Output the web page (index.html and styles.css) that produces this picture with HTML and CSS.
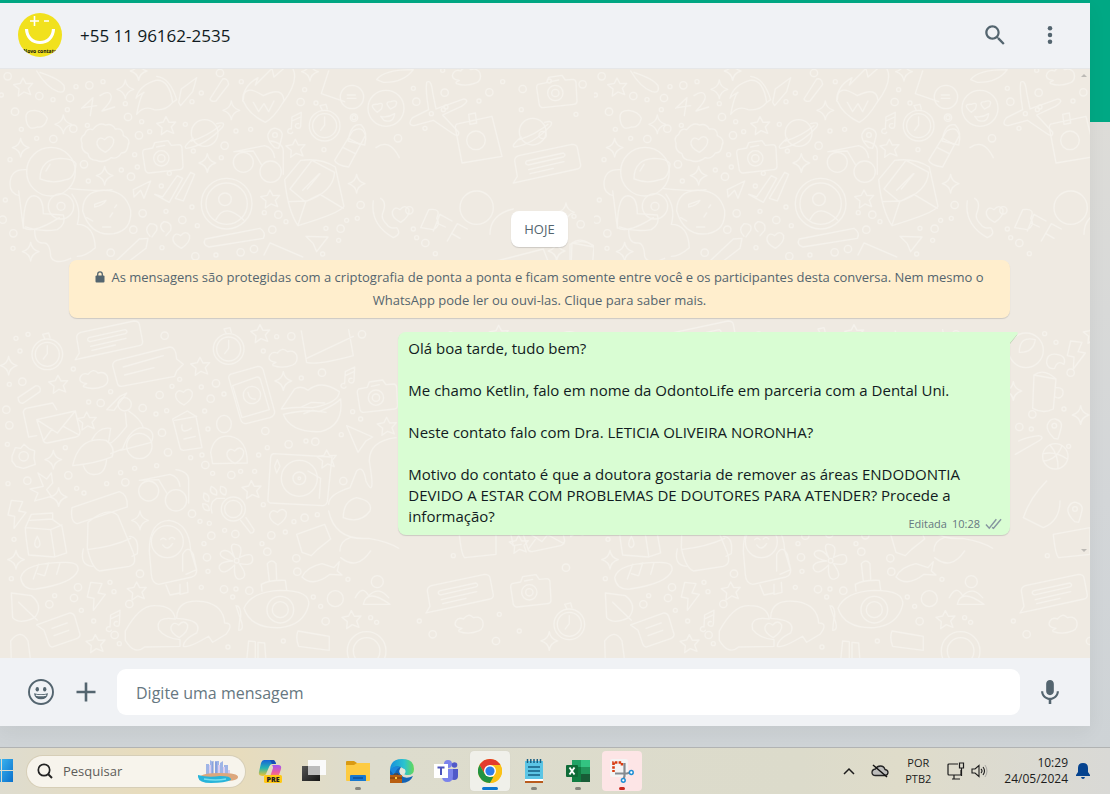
FILE: index.html
```html
<!DOCTYPE html>
<html lang="pt-BR">
<head>
<meta charset="utf-8">
<title>WhatsApp</title>
<link rel="stylesheet" href="styles.css">
</head>
<body>
<div class="desktop">
  <main class="app">
    <header class="chat-header">
      <svg class="avatar" viewBox="0 0 44 44" aria-hidden="true">
        <defs><clipPath id="round"><circle cx="22" cy="22" r="22"/></clipPath></defs>
        <g clip-path="url(#round)">
          <rect width="44" height="44" fill="#f1e11d"/>
          <path d="M16.500 3v10M12 8h9M26 8h5" stroke="#fff" stroke-width="1.600" fill="none"/>
          <path d="M8.500 16C9 25 15 29.500 22 29.500S35 25 35.500 16" stroke="#fff" stroke-width="3.200" fill="none"/>
          <text x="22" y="40" text-anchor="middle" class="avatar-text">Novo contato</text>
        </g>
      </svg>
      <h1 class="contact">+55 11 96162-2535</h1>
      <button class="icon-button" aria-label="Pesquisar na conversa">
        <svg viewBox="0 0 24 24"><path d="M15.900 14.300H15l-.3-.3c1-1.100 1.600-2.700 1.600-4.300 0-3.700-3-6.700-6.700-6.700S3 6 3 9.700s3 6.700 6.700 6.700c1.600 0 3.200-.6 4.300-1.600l.3.3v.8l5.100 5.100 1.500-1.500-5-5.200zm-6.200 0c-2.600 0-4.600-2.100-4.600-4.600s2.100-4.600 4.600-4.600 4.600 2.100 4.600 4.600-2 4.600-4.600 4.600z"/></svg>
      </button>
      <button class="icon-button" aria-label="Mais opções">
        <svg viewBox="0 0 24 24"><circle cx="12" cy="5.800" r="2.100"/><circle cx="12" cy="12" r="2.100"/><circle cx="12" cy="18.200" r="2.100"/></svg>
      </button>
    </header>

    <section class="chat">
      <svg class="wallpaper" aria-hidden="true">
        <defs>
          <marker id="dot-s" markerUnits="userSpaceOnUse" markerWidth="20" markerHeight="20" refX="10" refY="10"><circle cx="10" cy="10" r="6" class="ink"/></marker>
          <marker id="dot-m" markerUnits="userSpaceOnUse" markerWidth="32" markerHeight="32" refX="16" refY="16"><circle cx="16" cy="16" r="11" class="ink"/></marker>
          <marker id="spark" markerUnits="userSpaceOnUse" markerWidth="70" markerHeight="70" refX="35" refY="35"><path class="ink" d="M35 7q3 22 25 28q-22 6-25 28q-3-22-25-28q22-6 25-28z"/></marker>
          <marker id="star" markerUnits="userSpaceOnUse" markerWidth="70" markerHeight="70" refX="35" refY="35"><path class="ink" d="M33 8l9 17 20-1-13 15 7 19-20-8-17 12 2-21-16-13 20-4z"/></marker>
          <g id="camera"><path d="M8 28l26-5 6-16 40-6 10 14 24-2q8 2 8 10l3 56q-1 8-10 9l-92 10q-8 0-11-8L4 38q0-8 4-10z"/><circle cx="60" cy="54" r="23"/><circle cx="60" cy="54" r="11"/><path d="M46 20l24-5"/></g>
          <path id="cloud" d="M28 42Q0 38 10 20q8-12 22-6Q48-6 62 10q20-6 28 10 6 22-12 30-30 12-58 2-6-4 8-10z"/>
          <path id="heart" d="M28 48Q0 34 3 16 10-2 26 10 42-8 53 10 56 30 28 48z"/>
          <g id="clock"><circle cx="50" cy="50" r="46"/><circle cx="50" cy="50" r="36"/><path d="M50 24v24l-12 16M42 2l-6-12 18-4 4 14"/></g>
          <g id="letter"><path d="M6 42l116-26 14 62q0 12-12 16l-86 18q-10 0-12-8L6 42zM6 42l62 40 54-66M26 106l26-36M134 88L86 62M6 90L-18 94-34 20Q-34 12-26 8L54-8l12 20"/></g>
          <g id="sat"><circle cx="60" cy="52" r="40"/><path d="M26 68Q-8 96 6 98q56-8 108-64 10-18-18-10M20 76Q70 60 106 30"/></g>
          <path id="notes" d="M16 60a8 7 0 1 1-4-10L14 14l28-14-2 42a8 7 0 1 1-6-8M14 26l26-12"/>
          <g id="talk"><path d="M20 34L180 0q14 0 16 10l10 52q0 10-10 12L40 108 4 116l12-20L8 50q0-12 12-16z"/><path d="M44 50l110-24q10 6 0 12L48 62q-12-4-4-12zM50 76l106-24M54 88l70-16"/></g>
          <g id="pin"><path d="M24 62Q0 38 4 22 12 2 28 4 50 10 46 28 42 46 36 64z"/><circle cx="25" cy="24" r="7"/></g>
          <g id="shades"><circle cx="36" cy="64" r="30"/><circle cx="118" cy="92" r="32"/><path d="M8 32l58-2 24 40M10 32L100 14q26 6 30 36M118 0q38 6 38 30v70"/></g>
          <g id="mug"><path d="M10 16l66 12-8 90q-30 16-62-2zM10 16q30-22 66 12M76 54q26-2 20 22-8 14-22 6"/></g>
          <path id="bolt" d="M10 0l34 4-12 28 22 4-36 48 2-36-20-4z"/>
          <g id="plane"><path d="M66 6q14-10 18 30l10 50 84-30q20 4-8 22l-56 26 48 52q2 18-20 2l-56-38-58 16q-22-2-4-24l48-24q-10-60-6-82z"/><circle cx="80" cy="100" r="6"/><circle cx="116" cy="88" r="6"/></g>
          <g id="flower"><path d="M54 44Q34 0 56 4q26 2 12 40 40-20 40 4 2 22-40 14 30 40 4 46-22 4-18-42-36 36-46 10-4-20 40-22Q0 42 14 26q20-12 40 18z"/><circle cx="60" cy="53" r="7"/></g>
          <g id="ball"><circle cx="38" cy="38" r="38"/><path d="M2 30q36-8 72 16M22 4q26 30 24 70M2 52q40-4 56-46"/></g>
        </defs>
        <pattern id="doodles" width="594" height="589" patternUnits="userSpaceOnUse">
          <g class="ink" transform="translate(0 2) scale(.3333)">
            <path d="M120 4q60 20 72 40 6 24-18 18Q140 50 110 0M245 112l34-32-8 54M250 110l40-6M300 74q30-20 34 4 0 14-28 42l38-12M410 130q12-60 22-66-22 12-24 18 10-40 60-54 40-4 50 66-20 26-56 22-30-14-52 14zM470 16q40 4 60 70l-14 10M536 94l8-40 46-34-12 42-36 42zM630 84l38-60q16-4 18 16l-38 50q-14 4-18-6z"/>
            <path d="M728 90q0-44 46-70l-8 22 50-50 6 26 46-40q40 40-20 118-26 44-52 58-50-24-66-64zM730 86q0-50 60-12 60-30 62 16M760 94l16 28 16-24 14 24 16-32M986 0l-22 68 70 24"/>
            <circle cx="1056" cy="78" r="35"/><path d="M1042 72h24M1042 82h26"/>
            <path d="M78 142q-2-24 26-24 30 4 38 24-8 30-30 26-30 14-34-26zM246 216q-8-16 8-26 6-20 24-14 20-24 38-14 20-6 30 12 24-4 24 20 24 10 14 30-2 22-20 22-12 20-30 14-24 18-44 8-24 0-26-20-22-8-18-32z"/>
            <use href="#heart" x="288" y="196"/><use href="#camera" x="424" y="208"/><use href="#sat" x="554" y="134"/><use href="#shades" x="694" y="210"/>
            <use href="#notes" x="862" y="124"/><use href="#pin" x="800" y="168"/><use href="#clock" x="924" y="114"/><use href="#heart" x="516" y="484"/>
            <path d="M1004 268l54-88q30-18 38 14l-50 94q-36-4-42-20zM1030 230l36 18M1046 202l34 18"/>
            <circle cx="153" cy="302" r="73"/><path d="M120 324q0-60 62-62 40 2 46 16-4 46-30 48-40 14-78-2zM138 300l12-20M80 296q-50-4-50 44 0 28 28 34M56 360l14 110q30 20 108-30M70 472q0-110 40-96 20 8 20 52l60 4q10 26-18 44-50 8-96-8M104 478q0 40 26 38 20-2 22 40 10 28 60 6M206 352q90 10 130 4"/>
            <circle cx="183" cy="406" r="38"/><circle cx="183" cy="406" r="12"/>
            <path d="M248 420q0-60 62-62 66-2 82 60 4 60-50 70-70 10-94-68zM216 370q30 40 16 90 50 0 54 70-30 26-54 26M284 400l34-12q-8 16-34 20zM330 438l8-12M344 410l6-8M260 440l18 10M308 468h24M400 356l52-26-20 52-10-24-20 20zM466 370l22 8 44-64 16 8-40 72-44-24zM526 382l46-78 12 6-34 80z"/>
            <circle cx="680" cy="398" r="76"/><circle cx="680" cy="398" r="62"/><circle cx="675" cy="385" r="19"/><path d="M648 446q26-54 84 2"/>
            <path d="M854 326l48-58q60-8 104 20l26 118q-10 20-138 58-30-44-40-138zM870 354l66-86 68 36q-4 60-88 88zM866 392l54-2 40-20 70 42M918 390l-24 72M908 358l50-50M922 354l38-46M450 496q-20-20 0-38 26 0 20 20l-14 20M492 482q-20-18 0-30 26 2 20 26l-14 16M616 504l164-32q20 14 10 30l-164 26q-20-8-10-24M918 496l66 2-34 44-10-24zM348 570l70-66 26-2-6 30-50 38M792 552l18-36 98 42"/>
            <path class="many-s" d="M4 72L64 175L159 86L110 202L228 47L262 163L376 98L202 116L309 32L425 152L449 182L404 251L412 288L484 345L580 240L664 260L708 180L576 92L604 66L752 175L724 32L914 56L948 96L972 236L265 330L364 297L30 266L16 387L39 532L486 530L576 408L592 464L648 552L498 421L793 425L858 452L978 472L1016 508L1040 448L968 549L1072 442L508 307L556 160"/>
            <path class="many-m" d="M23 16L45 122L118 75L210 81L160 204L268 43L252 280L220 173L384 138L417 193L674 224L393 317L8 446L40 487L428 427L547 447L400 476L332 545L586 556L722 544L762 534L835 431L817 476L902 93L1062 140L1082 402L1022 473L660 6"/>
            <path class="many-spark" d="M62 230L190 160L376 55L694 118L622 276L314 314L92 542L1070 338L416 0L930 2"/><path class="many-star" d="M71 48L500 164L888 232L812 384"/>
          </g>
          <g class="ink" transform="translate(0 262) scale(.3333)">
            <use href="#clock" x="92" y="20"/><use href="#talk" x="222" y="-30"/><path d="M350 88l160-40q18 0 20 36l20 16-20 20-6 16-160 30q-10 0-12-10l-14-52q0-12 12-16zM370 108l120-34M374 132l88-22"/>
            <use href="#clock" x="636" y="4"/><use href="#cloud" x="800" y="52"/><use href="#cloud" x="232" y="116"/><use href="#heart" x="524" y="174"/><use href="#letter" x="104" y="224"/><use href="#notes" x="1022" y="108"/><use href="#camera" x="1068" y="146"/>
            <path d="M698 128l76-22q12 0 16 12l34 124q0 12-14 18l-72 18q-12 0-16-12l-36-126q0-10 12-12zM698 164l74-26q8 0 10 10l26 88-82 24zM844 234l40-60q20-12 40 4 40-34 94 4 0 32-80 48-50-4-94 4zM850 250q70-16 108-8 50-22 64-38 10 80-60 98-90 4-112-52zM904 228l30-14 40 2M912 248l26-10 40 6M904 0l16 94q30 10 140-20L1046-4M920 82l140-66"/>
            <circle cx="756" cy="192" r="26"/><path d="M744 184q4 22 22 20M54 200l54-36q16 0 12 18l-50 34q-14 4-16-16z"/>
            <path d="M376 246l4 40q-40 50-50 50M320 236l40-40 20-10-38 52zM386 240q36 24 44 50-40 0-62 64l-36 14M218 404q20-90 100-76 30 20 18 50-50 20-118 26zM250 404q10 30 36 26 30 0 34-46M276 326q20-40 56-34l-6 38M430 290q40 8 24 44l-92 24"/><circle cx="418" cy="345" r="38"/><circle cx="374" cy="220" r="20"/>
            <path d="M518 264l44-24 26 16 18 94-56 8q-8 0-10-8zM524 268l66-12M552 324l34-8M632 364q10-54 60-48 50 10 50 80l-104 2zM546 282q-4 30 28 10"/><ellipse cx="672" cy="279" rx="22" ry="26"/><use href="#heart" x="678" y="350"/>
            <path d="M820 368l176 10-14 134q-4 12-14 12l-158-8q-8-4-6-12l8-124q0-8 8-12zM832 386l8 20-10 20-6-20zM924 420l38 22-4 60"/><circle cx="898" cy="442" r="54"/><circle cx="898" cy="442" r="19"/><circle cx="898" cy="442" r="4"/>
            <path d="M1040 284l78 34-20 12-24 34zM36 376l10-26 16 2 10-12 16 14 16 6-2 22 4 18-22 8-14 4-22-6-12-16z"/><circle cx="71" cy="376" r="14"/>
            <use href="#shades" x="410" y="416"/><path d="M90 474l40-8-16-40 26 18 14-18 4 30-18 20 14 20-50 14 10-24z"/><use href="#bolt" x="24" y="508"/><use href="#bolt" x="262" y="754"/>
            <path d="M76 590l18-40 64-4v20l28 20 14 80-36 12-78-6q-10-60-10-82zM76 590l76 6 34-14M152 596l12 78M90 568l68-4M112 616q-16 28 0 34 16-6 0-34zM216 530l142-48q26 8 24 46l-150 50q-22-4-16-48zM262 650l2-76q60-50 90-20l44 106q16 40-10 46l-90 14q-24-10-36-70zM262 656q80-10 130-34M250 654q-12 50 28 52M388 616q30 0 24 52l-16 8"/>
            <path d="M448 660q0-90 60-92 60 10 64 90l18 60q0 16-14 20l-100 22q-20-2-22-30zM548 720V670q16-30 32 0l10 46-32 14M498 762l12 30 30-6v-26M540 760v30l24-6-2-30M482 626q8-8 16 0M508 624q8-10 16 0M488 642q14 20 30-4"/><circle cx="502" cy="632" r="48"/>
            <path d="M62 740q10-46 136-46 40 0 36 24-14 40-126 56-40 4-46-34zM100 744l16-44M134 734l12-38M170 730l10-34M112 728l20 6M34 786l60 8q38 30 10 66-46 22-66 0zM56 814l56 54M110 882l100-36q10 0 14 10l16 54q0 10-8 12l-74 26q-8 0-12-10l-14-40zM156 892l46-16M162 914l44-16"/>
            <use href="#flower" x="650" y="636"/><circle cx="700" cy="534" r="36"/><circle cx="700" cy="534" r="26"/><path d="M722 568l30 38q10 0 10-10l-24-36M636 546q-10-30 14-44h24M612 486q20 4 14 26-20-2-14-26zM608 518q20 0 20 20-20 4-20-20zM634 466q20 8 16 26-26-4-16-26zM662 466q24 2 14 26-20-4-14-26z"/>
            <path d="M376 900q44-80 90-76 54 0 60 40-60-10-50 32 20 26 64 30v20l-106 2q-30 26-58-20zM530 862q0-60 80-50 60 10 64 64 30 0 4 34l-40 24-12-18q-60 36-76 30 0-20 40-40 20-40-60-44z"/><use href="#heart" x="510" y="872"/>
            <path d="M732 832q20-50 110-54 90 0 84 44-14 60-84 68-90 4-110-58zM786 780l-2-20q26-14 72-12l4 28M808 750l-6-52q14-16 26 0l2 46M720 860l-12-36q16 0 14 36zM720 860l-4 38q20 0 4-38"/><circle cx="841" cy="836" r="40"/><circle cx="841" cy="836" r="24"/>
            <path d="M890 610l84-30 18 44-40 32-18 18-28-10zM906 738q14-30 60-40l36 12 16-18-6 28 14 12-36-2q-50 40-84 8zM894 900l70 12 24 4v42l-92-12q-10-26-2-46zM986 520q0-30 64-50l20-50q20-20 28 30 30 60 10-60 0-60 80-70M986 540q20 90 120 82 60 10 90 30M1030 560q0-50 40-60 50 10 40 40-30 40-80 20zM1020 660q0-30 30-40M1022 680q50 40 90-20M1066 800q20-40 40-6 30-30 60 6M1090 820q10-50 80 0zM740 990l6-60 20 2v50M774 982V934l20 2 4 54M34 990l-2-60q30-40 52 0l8 60"/>
            <use href="#heart" x="806" y="534"/><use href="#notes" x="318" y="838"/><circle cx="1132" cy="752" r="18"/><circle cx="1006" cy="803" r="24"/><circle cx="1100" cy="960" r="58"/><circle cx="1100" cy="960" r="40"/>
            <path class="many-s" d="M48 22L84 10L60 60L28 160L220 114L332 182L266 213L22 340L196 350L24 458L230 472L320 458L362 425L404 412L470 404L252 486L42 625L34 743L164 794L244 838L330 754L342 782L281 870L358 938L468 249L500 239L614 240L624 294L606 372L572 380L638 427L722 421L764 421L790 521L600 571L628 577L674 598L612 638L624 721L708 774L698 798L786 638L856 603L882 572L952 551L802 350L776 372L918 330L1024 311L1058 242L1082 264L904 141L790 60L830 17L962 826L1044 745L940 798L1112 860L1130 874L850 930L684 948L604 769L516 166L539 145L604 168L672 189"/>
            <path class="many-m" d="M67 152L19 236L28 283L82 449L205 433L376 454L302 216L428 231L479 192L486 305L504 364L616 402L694 432L576 548L634 614L706 609L621 679L672 775L748 779L814 613L802 662L889 682L892 722L796 300L866 340L914 560L977 871L946 332L966 125L874 16L1086 10L1030 450L494 14L420 728L234 769L222 801L148 820L388 819L344 912L632 203L648 157"/>
            <path class="many-spark" d="M26 104L160 386L176 498L420 568L48 686L850 150"/><path class="many-star" d="M176 160L262 270L602 106L756 476L412 780L288 938L1056 866L1162 286L982 384L782 8"/>
          </g>
          <g class="ink" transform="translate(336 -68) scale(.3333)">
            <circle cx="150" cy="322" r="54"/><path d="M124 334q-30-26 0-24 22-10 12 14zM164 324q-22-22 0-22 26-8 14 14zM134 346q20 6 42-8-4 30-32 20zM122 236q20-30 110-30-30 40-90 38z"/><use href="#plane" x="206" y="238"/><use href="#cloud" x="342" y="196"/>
            <path d="M358 380q0-12 10-12l100-22 30 120-120 20zM398 340l20-4 4 30-20 4z"/><circle cx="420" cy="418" r="28"/><path d="M36 420q10-56 40-48 20 20 10 60zM120 440q40-30 70 30"/>
            <path class="many-s" d="M232 262L429 300L267 382L54 350L320 208L330 318M500 242L556 326L640 240L720 340"/><path class="many-m" d="M241 302L326 275L460 274L186 412L560 264L620 402L740 250"/>
            <use href="#sat" x="530" y="340"/><use href="#talk" x="528" y="430"/><use href="#camera" x="598" y="222"/>
          </g>
          <g class="ink" transform="translate(370 132) scale(.3333)">
            <path d="M10 0q-10 70 60 110 26-10 10-30-20 4-30-10-20-20-10-38 10-30-8-40M152 80l24-54q40-6 24 26 14 20-10 34zM190 90l20-50 36 20M200 66l26 12M232 120l30-52 30 16M246 98l24 14M360 100q0-60 70-76M380 180l140-36 14 36M600 180V130q40-20 80 10l-6 50"/><use href="#heart" x="64" y="16"/><circle cx="320" cy="20" r="50"/><use href="#mug" x="596" y="110"/>
            <path class="many-m" d="M166 126L632 70L118 28"/><path class="many-s" d="M140 110L196 158L130 84L612 46"/><path class="many-spark" d="M588 34L560 150"/>
          </g>
          <g class="ink" transform="translate(266 252) scale(.3333)">
            <circle cx="498" cy="88" r="52"/><path d="M478 94q0-50 48-38-6 40-48 38zM560 126q0-30 30-26 30 4 22 30-20-14-28 12-20 4-24-16zM476 360q20-10 60-16 20 4 0 16l-70 40M490 590q20-60 70-110M600 540q0 60-50 80l-60-30M580 640l110-20v80l-94 10q-10-10-16-70z"/>
            <use href="#bolt" x="622" y="60"/><use href="#mug" x="512" y="146"/><use href="#pin" x="558" y="290"/><use href="#pin" x="620" y="540"/><use href="#ball" x="548" y="368"/>
            <use href="#plane" x="720" y="130"/><use href="#flower" x="780" y="380"/><use href="#letter" x="760" y="580"/><use href="#camera" x="730" y="760"/><use href="#talk" x="476" y="760"/><use href="#cloud" x="560" y="880"/><use href="#clock" x="860" y="860"/><use href="#sat" x="850" y="20"/>
            <path class="many-s" d="M554 38L588 64L514 324L612 264L626 376L562 704L700 460L750 340L920 330L880 520L700 880L760 930L460 900"/><path class="many-m" d="M517 280L478 318L632 155L740 480L940 470L720 540L900 740L500 940L690 960"/><path class="many-spark" d="M460 210L662 282L940 380L850 960"/><path class="many-star" d="M700 40L760 670L930 620"/>
          </g>
        </pattern>
        <rect width="100%" height="100%" fill="url(#doodles)"/>
      </svg>
      <div class="scroll-marks" aria-hidden="true"><i class="up"></i><i class="down"></i></div>

      <div class="messages">
        <time class="day">HOJE</time>
        <p class="notice"><svg class="lock" viewBox="0 0 10 12" aria-hidden="true"><path d="M1.500 4.500h7q1 0 1 1v5q0 1-1 1h-7q-1 0-1-1v-5q0-1 1-1z"/><path d="M2.700 5V3.200a2.300 2.300 0 0 1 4.600 0V5" fill="none" stroke="#54656f" stroke-width="1.300"/></svg>As mensagens são protegidas com a criptografia de ponta a ponta e ficam somente entre você e os participantes desta conversa. Nem mesmo o WhatsApp pode ler ou ouvi-las. Clique para saber mais.</p>
        <article class="bubble">
          <svg class="tail" viewBox="0 0 8 12" aria-hidden="true"><path d="M0 1.500L7.500 2.500 0 12z" fill="#b9c9ad"/><path d="M0 0h7q1.500.5.500 2L0 11z" fill="#d9fdd3"/></svg>
          <p>Olá boa tarde, tudo bem?</p>
          <p>Me chamo Ketlin, falo em nome da OdontoLife em parceria com a Dental Uni.</p>
          <p>Neste contato falo com Dra. LETICIA OLIVEIRA NORONHA?</p>
          <p>Motivo do contato é que a doutora gostaria de remover as áreas ENDODONTIA DEVIDO A ESTAR COM PROBLEMAS DE DOUTORES PARA ATENDER? Procede a informação?<span class="meta"><span>Editada</span><time>10:28</time><svg viewBox="0 0 18 12" aria-hidden="true"><path d="M1 6.500l3.500 4L12 1M7.500 9.500l1.500 1L17 1" fill="none" stroke="#8696a0" stroke-width="1.500"/></svg></span></p>
        </article>
      </div>
    </section>

    <form class="composer">
      <button type="button" class="icon-button" aria-label="Emojis">
        <svg viewBox="0 0 26 26"><circle cx="13" cy="13" r="12" fill="none" stroke="#54656f" stroke-width="1.900"/><ellipse cx="9.300" cy="10.200" rx="1.700" ry="2.200"/><ellipse cx="16.700" cy="10.200" rx="1.700" ry="2.200"/><path d="M6 14.300q7 1.800 14 0-.7 6-7 6t-7-6z"/><path d="M7.800 16.100q5.200 1.100 10.400 0" fill="none" stroke="#f0f2f5" stroke-width="1.300"/></svg>
      </button>
      <button type="button" class="icon-button" aria-label="Anexar">
        <svg viewBox="0 0 26 26"><path d="M13 3.500v19M3.500 13h19" stroke="#54656f" stroke-width="2.600"/></svg>
      </button>
      <input class="entry" type="text" placeholder="Digite uma mensagem" aria-label="Digite uma mensagem">
      <button type="button" class="icon-button mic" aria-label="Gravar áudio">
        <svg viewBox="0 0 24 24"><path d="M12 14.942c2 0 3.531-1.530 3.531-3.531V4.350C15.531 2.350 14 .819 12 .819S8.469 2.350 8.469 4.350v7.061c0 2 1.530 3.531 3.531 3.531zM18.237 11.412c0 3.531-2.942 6.002-6.237 6.002s-6.237-2.471-6.237-6.002H3.761c0 4.001 3.178 7.297 7.061 7.885v3.884h2.354v-3.884c3.884-.588 7.061-3.884 7.061-7.885h-2z"/></svg>
      </button>
    </form>
  </main>
</div>

<nav class="taskbar" aria-label="Barra de tarefas">
  <button class="start" aria-label="Iniciar"><svg viewBox="0 0 13 24"><defs><linearGradient id="win" x2="1" y2="1"><stop stop-color="#3cb6f0"/><stop offset="1" stop-color="#0a70cc"/></linearGradient></defs><path d="M0 0h1v11H0zM2 0h11v11H2zM0 12h1v11H0zM2 12h11v11H2z" fill="url(#win)"/></svg></button>
  <label class="search">
    <svg class="lens" viewBox="0 0 16 16" aria-hidden="true"><circle cx="7" cy="7" r="5.700" fill="none" stroke="#222" stroke-width="1.700"/><path d="M11 11l4 4" stroke="#222" stroke-width="2"/></svg>
    <input type="text" placeholder="Pesquisar" aria-label="Pesquisar">
    <svg class="island" viewBox="0 0 40 24" aria-hidden="true"><path d="M8 5h3v11H8zM12 1l3 2v13h-3zM17 2h4v14h-4zM22 4l3-2v14h-3zM26 6h4v10h-4z" fill="#9fb5e6"/><path d="M11 6h2v10h-2zM20 6h2v10h-2zM25 8h2v8h-2zM30 11h2v6h-2z" fill="#d9cdf0"/><path d="M15 2v14M18 3v13" stroke="#6687cf" stroke-width=".8"/><path d="M2 18q2-4 20-4 18 0 18 4t-14 4q-20 0-24-4z" fill="#dca77d"/><path d="M0 16q10 3 22 1 12 0 11 4-6 3-20 3Q-1 24 0 16z" fill="#28b4da"/><path d="M6 20q12 2 22 0" stroke="#79e0ee" stroke-width="1.500" fill="none"/></svg>
  </label>
  <div class="apps">
    <button aria-label="Copilot"><svg viewBox="0 0 24 24"><defs><linearGradient id="cp1" x2="0" y2="1"><stop stop-color="#1763d8"/><stop offset=".5" stop-color="#25b4b1"/><stop offset="1" stop-color="#f2c330"/></linearGradient><linearGradient id="cp2" x2="0" y2="1"><stop stop-color="#a455f2"/><stop offset=".6" stop-color="#f0609a"/><stop offset="1" stop-color="#f99a57"/></linearGradient></defs><path d="M6 1h9q2 0 3 4h-4q-2 0-3 3l-3 7q-1 2-3 2-5 0-4-4L3 4q1-3 3-3z" fill="url(#cp1)"/><path d="M14 6h6q4 0 3 4l-2 6q-1 3-4 3H9q3 0 4-4l2-6q0-2-1-3z" fill="url(#cp2)"/><path d="M12 1h3q2 0 3 4h-4z" fill="#174eb5"/><rect x="6" y="16" width="18" height="8" rx="1.500" fill="#ffc915"/><text x="15" y="23" text-anchor="middle" class="pre">PRE</text></svg></button>
    <button aria-label="Visão de tarefas"><svg viewBox="0 0 24 24"><defs><linearGradient id="tv" x2="1" y2="1"><stop stop-color="#555"/><stop offset="1" stop-color="#151515"/></linearGradient></defs><path d="M0 7h18v15H0z" fill="url(#tv)"/><path d="M6 1h18v15H6z" fill="#fafafa"/><path d="M6 7h12v9H6z" fill="#bcbcbc"/></svg></button>
    <button class="running" aria-label="Explorador de Arquivos"><svg viewBox="0 0 24 24"><path d="M0 3q0-1 1-1h7l3 2h13v6H0z" fill="#d99a12"/><path d="M0 6h8l3-2h13v17q0 1-1 1H1q-1 0-1-1z" fill="#fdcb42"/><path d="M4 22v-5q0-1 1-1h14q1 0 1 1v5z" fill="#1779cf"/><path d="M7 19h10" stroke="#0c4f9a" stroke-width="1.500"/></svg></button>
    <button aria-label="Microsoft Edge"><svg viewBox="0 0 24 24"><defs><linearGradient id="ed" x2="1"><stop stop-color="#168fdd"/><stop offset=".6" stop-color="#2bc3cf"/><stop offset="1" stop-color="#65d957"/></linearGradient></defs><path d="M0 12Q0 0 12 0t12 10q0 6-6 6-5 0-4-3 0-5-5-5-7 0-9 7z" fill="url(#ed)"/><path d="M0 12q4-6 11-4-3 4 0 8 4 5 12 1-3 7-11 7-13-1-12-12z" fill="#1363b5"/><path d="M0 11q4-5 10-3-7 4-4 11z" fill="#1b85da"/><circle cx="12.500" cy="12.500" r="3" fill="#e4e6dc"/><rect y="16" width="12" height="8" fill="#b95f12"/><path d="M4 16v-1h4v1M0 19h12" stroke="#70370b" fill="none"/><path d="M5 18h2v2H5z" fill="#ffc53c"/></svg></button>
    <button aria-label="Microsoft Teams"><svg viewBox="0 0 24 24"><circle cx="14" cy="5" r="4" fill="#7b83eb"/><circle cx="20.500" cy="6" r="2.800" fill="#5059c9"/><path d="M16 10h8v7q0 4-4 4-3 0-4-3z" fill="#5059c9"/><path d="M8 10h11v7q0 6-5.500 6T8 17z" fill="#7b83eb"/><path d="M0 5h14v14H0z" fill="#fff"/><path d="M3.500 8.500h7M7 8.500V16" stroke="#4b53bc" stroke-width="2"/></svg></button>
    <button class="active" aria-label="Google Chrome"><svg viewBox="0 0 24 24"><circle cx="12" cy="12" r="12" fill="#fbc116"/><path d="M1.600 6A12 12 0 0 1 22.400 6H12L7 15z" fill="#e33b2e"/><path d="M1.600 6l5.200 9 5.200 3h5L12 24A12 12 0 0 1 1.600 6z" fill="#229342"/><path d="M17 15l-5 9A12 12 0 0 0 22.400 6H12z" fill="#fbc116"/><circle cx="12" cy="12" r="6" fill="#fff"/><circle cx="12" cy="12" r="4.600" fill="#2f7de9"/></svg></button>
    <button class="running" aria-label="Bloco de Notas"><svg viewBox="0 0 24 24"><path d="M3 21h18v3H3z" fill="#b95b1d"/><path d="M3 2h18v19H3z" fill="#5bc5e5"/><path d="M3 20h18v2H3z" fill="#fff"/><path d="M5.500 0v4M8.800 0v4M12 0v4M15.300 0v4M18.500 0v4M6 8h12M6 12h12M6 16h12" stroke="#165f83" stroke-width="1.500"/></svg></button>
    <button class="running" aria-label="Excel"><svg viewBox="0 0 24 24"><path d="M6 1h9v7H6z" fill="#21a366"/><path d="M15 1h9v7h-9z" fill="#33c481"/><path d="M6 8h9v15H6z" fill="#107c41"/><path d="M15 8h9v7h-9z" fill="#21965b"/><path d="M15 15h9v8h-9z" fill="#185c37"/><rect y="6" width="12" height="12" rx="1" fill="#0e6b37"/><path d="M3.500 8.500l5 7M8.500 8.500l-5 7" stroke="#fff" stroke-width="1.900"/></svg></button>
    <button class="running alert" aria-label="Ferramenta de Captura"><svg viewBox="0 0 24 24"><rect x="0" y="0" width="18" height="18" rx="2" fill="#f4f4f4"/><path d="M12 6.500V3.500H3.500V13" fill="none" stroke="#d73d12" stroke-width="2.600" stroke-dasharray="2.600 1.200"/><path d="M14.500 4v13l-1 3M5 14.500h12l3-1" fill="none" stroke="#858b91" stroke-width="2.200"/><circle cx="21.300" cy="13.500" r="1.900" fill="#fff" stroke="#2190d5" stroke-width="1.500"/><circle cx="13.300" cy="21.300" r="1.900" fill="#fff" stroke="#2190d5" stroke-width="1.500"/></svg></button>
  </div>
  <div class="tray">
    <button aria-label="Mostrar ícones ocultos"><svg width="12" height="8" viewBox="0 0 12 8"><path d="M1 7l5-5 5 5" fill="none" stroke="#1c1c1c" stroke-width="1.500"/></svg></button>
    <button aria-label="OneDrive"><svg width="18" height="14" viewBox="0 0 18 14"><path d="M4.500 11.500Q1 11.500 1 8.500q0-3 3.500-3.500Q6 2 9.500 2T14 5.500q3 .5 3 3t-3 3z" fill="#bdbdbb" stroke="#242424" stroke-width="1.300"/><path d="M2 1l14 12" stroke="#111" stroke-width="1.500"/></svg></button>
    <button class="lang" aria-label="Idioma">POR<br>PTB2</button>
    <button class="status" aria-label="Rede e volume"><svg width="18" height="18" viewBox="0 0 18 18"><path d="M11 2H2q-1 0-1 1v9q0 1 1 1h12V8M5 17h8M7 13v4M14.500 6v8M12.500 1h4v5h-4z" fill="none" stroke="#1c1c1c" stroke-width="1.200"/></svg><svg width="17" height="14" viewBox="0 0 17 14"><path d="M1 5h3l4-3.500v11L4 9H1zM10 5q2 2 0 4M12 3q3 4 0 8" fill="none" stroke="#1c1c1c" stroke-width="1.100"/><path d="M14 1q4 6 0 12" fill="none" stroke="#aaa9a5"/></svg></button>
    <button class="clock"><time>10:29<br>24/05/2024</time></button>
    <button class="bell" aria-label="Notificações"><svg width="14" height="16" viewBox="0 0 14 16"><path d="M7 0q5 0 5 5v4l2 3v1H0v-1l2-3V5q0-5 5-5zM5 14h4q-.5 2-2 2t-2-2z" fill="#05438f"/></svg></button>
  </div>
</nav>
</body>
</html>
```

FILE: styles.css
```css
* { box-sizing: border-box; }

body {
  margin: 0;
  min-height: 100vh;
  display: flex;
  flex-direction: column;
  font-family: "Open Sans", "Noto Sans", sans-serif;
  color: #111b21;
}

p, h1 { margin: 0; }

button {
  padding: 0;
  border: 0;
  background: none;
  color: inherit;
  font: inherit;
}

svg { display: block; }

.desktop {
  flex: 1;
  display: flex;
  padding: 3px 20px 21px 0;
  background:
    linear-gradient(#00a884, #00a884) 0 0 / 100% 122px no-repeat,
    linear-gradient(#dddcd8 122px, #d3d6d8 500px, #ced3d6);
}

.app {
  flex: 1;
  display: flex;
  flex-direction: column;
  background: #efeae2;
  box-shadow: 0 6px 18px rgba(11, 20, 26, 0.05);
}

.chat-header {
  display: flex;
  align-items: center;
  gap: 18px;
  height: 65px;
  padding: 0 27px 1px 18px;
  background: #f0f2f5;
}

.avatar { width: 44px; height: 44px; }
.avatar-text { font: 700 5px "Open Sans", sans-serif; fill: #111; }

.contact {
  flex: 1;
  font-size: 17px;
  font-weight: 400;
}

.icon-button {
  display: flex;
  justify-content: center;
  width: 26px;
}
.icon-button svg { width: 26px; height: 26px; fill: #54656f; }
.chat-header .icon-button + .icon-button { margin-left: 11px; }

.chat {
  position: relative;
  flex: 1;
  display: flex;
  border-top: 1px solid #e6e7e8;
}

.wallpaper {
  position: absolute;
  inset: 0;
  width: 100%;
  height: 100%;
}
.ink {
  fill: none;
  stroke: #f5f2ec;
  stroke-width: 4;
  stroke-linejoin: round;
  stroke-linecap: round;
}
.many-s, .many-m, .many-spark, .many-star { stroke: none; }
.many-s { marker: url(#dot-s); }
.many-m { marker: url(#dot-m); }
.many-spark { marker: url(#spark); }
.many-star { marker: url(#star); }

.scroll-marks {
  position: absolute;
  top: 5px;
  right: 3px;
  bottom: 106px;
  display: flex;
  flex-direction: column;
  justify-content: space-between;
}
.scroll-marks i { border: 3px solid transparent; }
.scroll-marks .up { border-top: 0; border-bottom-color: #bdbab5; }
.scroll-marks .down { border-bottom: 0; border-top-color: #bdbab5; }

.messages {
  position: relative;
  flex: 1;
  display: flex;
  flex-direction: column;
  justify-content: flex-end;
  padding: 0 80px 123px 69px;
}

.day {
  align-self: center;
  margin-bottom: 13px;
  padding: 0 13px;
  border-radius: 8px;
  background: #fff;
  box-shadow: 0 1px 1px rgba(11, 20, 26, 0.15);
  color: #54656f;
  font-size: 13px;
  line-height: 36px;
}

.notice {
  margin-bottom: 14px;
  padding: 6px 13px;
  border-radius: 8px;
  background: #ffeecd;
  box-shadow: 0 1px 1px rgba(11, 20, 26, 0.15);
  color: #54656f;
  font-size: 13px;
  line-height: 23px;
  text-align: center;
}
.lock {
  display: inline-block;
  width: 10px;
  height: 12px;
  margin-right: 6px;
  vertical-align: -1px;
  fill: #54656f;
}

.bubble {
  position: relative;
  align-self: flex-end;
  width: 65%;
  padding: 6px 8px 3px 10px;
  border-radius: 8px 0 8px 8px;
  background: #d9fdd3;
  box-shadow: 0 1px 1px rgba(11, 20, 26, 0.15);
  font-size: 15px;
  line-height: 21px;
}
.bubble p + p { margin-top: 21px; }
.tail {
  position: absolute;
  top: 0;
  left: 100%;
  width: 8px;
  height: 12px;
}
.meta {
  float: right;
  display: flex;
  align-items: center;
  gap: 5px;
  margin-top: 10px;
  color: #667781;
  font-size: 11px;
  line-height: 16px;
}
.meta svg { width: 17px; height: 12px; }

.composer {
  display: flex;
  align-items: center;
  padding: 11px 27px 11px 28px;
  background: #f0f2f5;
}
.composer .icon-button + .icon-button { margin-left: 19px; }
.entry {
  flex: 1;
  min-width: 0;
  height: 46px;
  margin: 0 17px 0 18px;
  padding: 1px 19px 0;
  border: 0;
  border-radius: 9px;
  background: #fff;
  font: 16px "Open Sans", "Noto Sans", sans-serif;
}
.entry::placeholder { color: #667781; opacity: 1; }

.taskbar {
  display: flex;
  align-items: center;
  height: 47px;
  padding-right: 20px;
  border-top: 1px solid #b1b3b3;
  background: linear-gradient(90deg, #dedccf, #e8dcbc 150px, #e7dcbd 240px, #dddccd 360px, #dcdbcb 800px, #dfdcca 900px, #d9d9d6);
  color: #1c1c1c;
}

.start { width: 13px; margin-right: 14px; }
.start svg { width: 13px; height: 24px; }

.search {
  display: flex;
  align-items: center;
  width: 218px;
  height: 31px;
  margin-right: 5px;
  padding: 0 7px 0 10px;
  border-radius: 16px;
  background: #f7f4ec;
  box-shadow: 0 0 0 1px #d6ceb7;
}
.lens { flex: none; width: 16px; height: 16px; }
.search input {
  flex: 1;
  min-width: 0;
  padding: 0 10px;
  border: 0;
  background: none;
  font: 13px "Open Sans", "Noto Sans", sans-serif;
}
.search input::placeholder { color: #5d5c59; opacity: 1; }
.island { flex: none; width: 40px; height: 24px; }

.apps { display: flex; gap: 4px; }
.apps button {
  position: relative;
  width: 40px;
  height: 40px;
  padding: 8px;
  border-radius: 4px;
}
.apps svg { width: 24px; height: 24px; }
.pre { font: 800 7px "Open Sans", sans-serif; fill: #222; }
.running::after, .active::after {
  content: "";
  position: absolute;
  bottom: 1px;
  left: 17px;
  width: 6px;
  height: 3px;
  border-radius: 2px;
  background: #86857d;
}
.apps .active { background: #f0f0ea; box-shadow: 0 0 1px #c9c8be; }
.active::after { left: 12px; width: 16px; background: #0b77d1; }
.apps .alert { background: #fde5e6; }
.alert::after { background: #c92a20; }

.tray {
  display: flex;
  align-items: center;
  gap: 16px;
  margin-left: auto;
  margin-right: 6px;
  font-size: 11px;
  line-height: 16px;
}
.status { display: flex; align-items: center; gap: 6px; }
.clock { font-size: 12px; text-align: right; }
.bell { margin: 0 -6px 0 -8px; }
```
